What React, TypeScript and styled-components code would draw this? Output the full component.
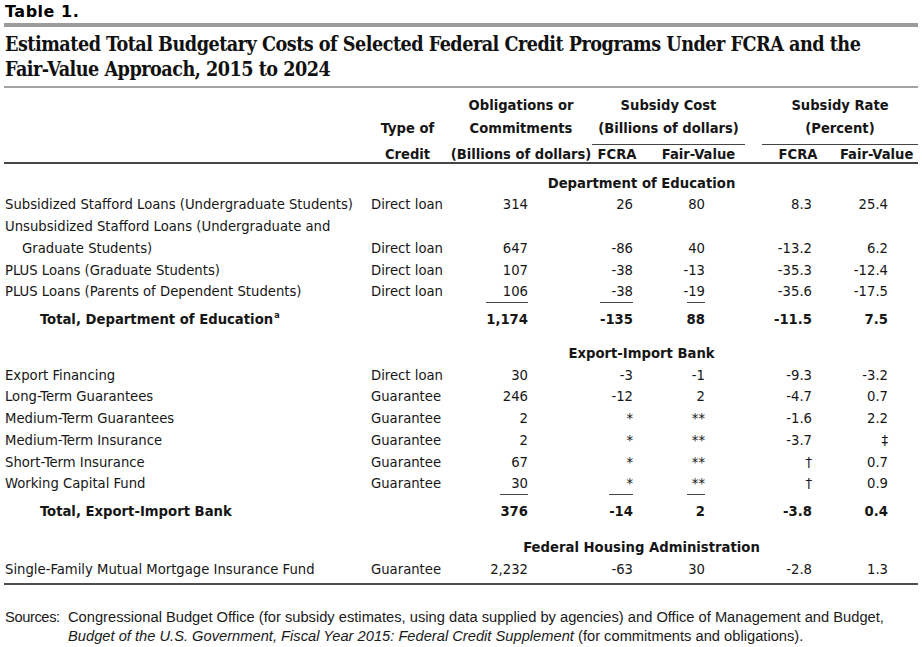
import React from 'react';
import styled, { createGlobalStyle } from 'styled-components';

const Global = createGlobalStyle`
  html, body { margin: 0; padding: 0; background: #ffffff; }
  body {
    font-family: "DejaVu Sans Condensed", "DejaVu Sans", sans-serif;
    font-stretch: condensed;
    color: #161616;
  }
`;

const COLS = '361px 85px 142px 60px 93px 95px 78px';

const Page = styled.div`
  width: 914px;
  padding: 0 4px;
`;

const Kicker = styled.div`
  font-family: "DejaVu Sans", sans-serif;
  font-stretch: normal;
  font-weight: 700;
  font-size: 16px;
  letter-spacing: 0.5px;
  line-height: 18px;
  padding: 3px 0 2px 1px;
  color: #000;
`;

const ThickRule = styled.div`
  height: 4px;
  background: #9c9c9c;
`;

const Title = styled.h1`
  margin: 5px 0 0 0;
  padding-left: 1px;
  font-family: "DejaVu Serif Condensed", "DejaVu Serif", serif;
  font-stretch: condensed;
  font-weight: 700;
  font-size: 19.6px;
  letter-spacing: -0.5px;
  line-height: 25px;
  color: #111;
`;

const ThinRule = styled.div`
  margin-top: 4px;
  height: 2px;
  background: #a3a3a3;
`;

const Head = styled.div`
  display: grid;
  grid-template-columns: ${COLS};
  grid-template-rows: 23px 28.5px 17px;
  padding-top: 5px;
  font-size: 14.6px;
  font-weight: 700;
  border-bottom: 2px solid #454545;
`;

const HCell = styled.div<{ $col: string; $row: number; $pl?: number; $pr?: number }>`
  grid-column: ${(p) => p.$col};
  grid-row: ${(p) => p.$row};
  text-align: center;
  white-space: nowrap;
  line-height: ${(p) => (p.$row === 3 ? '17px' : '23px')};
  padding-left: ${(p) => p.$pl ?? 0}px;
  padding-right: ${(p) => p.$pr ?? 0}px;
`;

const GroupCell = styled.div<{ $col: string; $ml?: number }>`
  grid-column: ${(p) => p.$col};
  grid-row: 2;
  text-align: center;
  white-space: nowrap;
  line-height: 23px;
  padding-bottom: 4px;
  margin-left: ${(p) => p.$ml ?? 0}px;
  border-bottom: 1.5px solid #454545;
`;

const Body = styled.div`
  font-size: 14.7px;
  line-height: 21.75px;
  padding-bottom: 4px;
  border-bottom: 2.5px solid #4f4f4f;
`;

const Section = styled.div<{ $gap: number }>`
  display: grid;
  grid-template-columns: ${COLS};
  margin-top: ${(p) => p.$gap}px;
  font-weight: 700;
`;

const SectionTitle = styled.div`
  grid-column: 2 / 8;
  text-align: center;
`;

const Row = styled.div<{ $total?: boolean }>`
  display: grid;
  grid-template-columns: ${COLS};
  align-items: end;
  font-weight: ${(p) => (p.$total ? 700 : 400)};
`;

const Label = styled.div<{ $indent?: number }>`
  padding-left: ${(p) => p.$indent ?? 1}px;
  white-space: nowrap;
`;

const Continued = styled.div`
  padding-left: 17px;
`;

const Kind = styled.div`
  padding-left: 6px;
  white-space: nowrap;
`;

const Num = styled.div<{ $pr: number }>`
  text-align: right;
  padding-right: ${(p) => p.$pr}px;
  white-space: nowrap;
`;

const Bar = styled.span`
  display: inline-block;
  min-width: 18px;
  text-align: right;
  border-top: 1.5px solid #474747;
  padding-top: 5px;
`;

const Sup = styled.sup`
  font-size: 9px;
  line-height: 0;
  vertical-align: 6px;
  margin-left: 1px;
`;

const Sources = styled.div`
  display: grid;
  grid-template-columns: 64px 1fr;
  margin-top: 23px;
  font-family: "Liberation Sans", sans-serif;
  font-stretch: normal;
  font-size: 14.7px;
  line-height: 19px;
  color: #1a1a1a;
`;

const SourceLabel = styled.div`
  padding-left: 1px;
  letter-spacing: -0.4px;
`;

const Em = styled.i`
  font-style: italic;
`;

const PADS = [64, 19, 40, 28, 30];

type Line = {
  label: string | [string, string];
  kind: string;
  vals: string[];
};

type Total = {
  label: string;
  sup?: string;
  vals: string[];
  bars: number;
};

const education: Line[] = [
  { label: 'Subsidized Stafford Loans (Undergraduate Students)', kind: 'Direct loan', vals: ['314', '26', '80', '8.3', '25.4'] },
  { label: ['Unsubsidized Stafford Loans (Undergraduate and', 'Graduate Students)'], kind: 'Direct loan', vals: ['647', '-86', '40', '-13.2', '6.2'] },
  { label: 'PLUS Loans (Graduate Students)', kind: 'Direct loan', vals: ['107', '-38', '-13', '-35.3', '-12.4'] },
  { label: 'PLUS Loans (Parents of Dependent Students)', kind: 'Direct loan', vals: ['106', '-38', '-19', '-35.6', '-17.5'] },
];

const exim: Line[] = [
  { label: 'Export Financing', kind: 'Direct loan', vals: ['30', '-3', '-1', '-9.3', '-3.2'] },
  { label: 'Long-Term Guarantees', kind: 'Guarantee', vals: ['246', '-12', '2', '-4.7', '0.7'] },
  { label: 'Medium-Term Guarantees', kind: 'Guarantee', vals: ['2', '*', '**', '-1.6', '2.2'] },
  { label: 'Medium-Term Insurance', kind: 'Guarantee', vals: ['2', '*', '**', '-3.7', '\u2021'] },
  { label: 'Short-Term Insurance', kind: 'Guarantee', vals: ['67', '*', '**', '\u2020', '0.7'] },
  { label: 'Working Capital Fund', kind: 'Guarantee', vals: ['30', '*', '**', '\u2020', '0.9'] },
];

const fha: Line[] = [
  { label: 'Single-Family Mutual Mortgage Insurance Fund', kind: 'Guarantee', vals: ['2,232', '-63', '30', '-2.8', '1.3'] },
];

const DataRow: React.FC<{ line: Line }> = ({ line }) => (
  <Row>
    <Label>
      {Array.isArray(line.label) ? (
        <>
          <div>{line.label[0]}</div>
          <Continued>{line.label[1]}</Continued>
        </>
      ) : (
        line.label
      )}
    </Label>
    <Kind>{line.kind}</Kind>
    {line.vals.map((v, i) => (
      <Num key={i} $pr={PADS[i]}>
        {v}
      </Num>
    ))}
  </Row>
);

const TotalRow: React.FC<{ total: Total }> = ({ total }) => (
  <Row $total>
    <Label $indent={36}>
      {total.label}
      {total.sup && <Sup>{total.sup}</Sup>}
    </Label>
    <Kind />
    {total.vals.map((v, i) => (
      <Num key={i} $pr={PADS[i]}>
        {i < total.bars ? <Bar>{v}</Bar> : v}
      </Num>
    ))}
  </Row>
);

export default function App() {
  return (
    <Page>
      <Global />
      <Kicker>Table 1.</Kicker>
      <ThickRule />
      <Title>
        Estimated Total Budgetary Costs of Selected Federal Credit Programs Under FCRA and the
        <br />
        Fair-Value Approach, 2015 to 2024
      </Title>
      <ThinRule />
      <Head>
        <HCell $col="2" $row={2}>Type of</HCell>
        <HCell $col="2" $row={3}>Credit</HCell>
        <HCell $col="3" $row={1}>Obligations or</HCell>
        <HCell $col="3" $row={2}>Commitments</HCell>
        <HCell $col="3" $row={3}>(Billions of dollars)</HCell>
        <HCell $col="4 / 6" $row={1}>Subsidy Cost</HCell>
        <GroupCell $col="4 / 6">(Billions of dollars)</GroupCell>
        <HCell $col="4" $row={3} $pr={10}>FCRA</HCell>
        <HCell $col="5" $row={3}>Fair-Value</HCell>
        <HCell $col="6 / 8" $row={1} $pl={17}>Subsidy Rate</HCell>
        <GroupCell $col="6 / 8" $ml={17}>(Percent)</GroupCell>
        <HCell $col="6" $row={3} $pl={11}>FCRA</HCell>
        <HCell $col="7" $row={3} $pr={14}>Fair-Value</HCell>
      </Head>
      <Body>
        <Section $gap={8}>
          <SectionTitle>Department of Education</SectionTitle>
        </Section>
        {education.map((l, i) => (
          <DataRow key={i} line={l} />
        ))}
        <TotalRow total={{ label: 'Total, Department of Education', sup: 'a', vals: ['1,174', '-135', '88', '-11.5', '7.5'], bars: 3 }} />
        <Section $gap={12}>
          <SectionTitle>Export-Import Bank</SectionTitle>
        </Section>
        {exim.map((l, i) => (
          <DataRow key={i} line={l} />
        ))}
        <TotalRow total={{ label: 'Total, Export-Import Bank', vals: ['376', '-14', '2', '-3.8', '0.4'], bars: 3 }} />
        <Section $gap={14}>
          <SectionTitle>Federal Housing Administration</SectionTitle>
        </Section>
        {fha.map((l, i) => (
          <DataRow key={i} line={l} />
        ))}
      </Body>
      <Sources>
        <SourceLabel>Sources:</SourceLabel>
        <div>
          Congressional Budget Office (for subsidy estimates, using data supplied by agencies) and Office of Management and Budget,
          <br />
          <Em>Budget of the U.S. Government, Fiscal Year 2015: Federal Credit Supplement</Em> (for commitments and obligations).
        </div>
      </Sources>
    </Page>
  );
}
